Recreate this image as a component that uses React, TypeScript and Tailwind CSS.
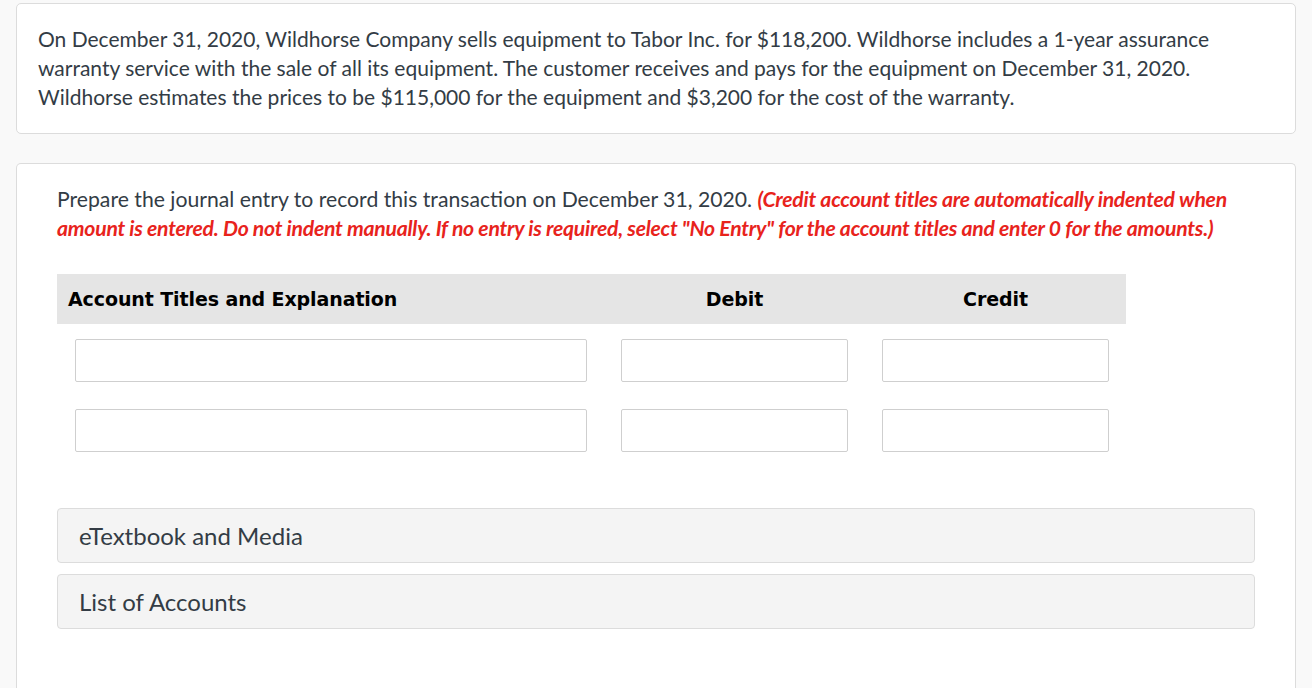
export default function App() {
  const lato = { fontFamily: "Lato, 'Open Sans', sans-serif" };
  const rows = [0, 1];
  return (
    <div className="h-[688px] bg-[#f9f9f9] pl-4 pr-4 pt-[3px] overflow-hidden" style={lato}>
      {/* question card */}
      <div className="rounded-[5px] border border-[#dcdcdc] bg-white pl-[21px] pr-4 pt-[20px] pb-[22px]">
        <p className="text-[21px] leading-[29px] text-[#333c45] whitespace-nowrap">
          On December 31, 2020, Wildhorse Company sells equipment to Tabor Inc. for $118,200. Wildhorse includes a 1-year assurance
          <br />
          warranty service with the sale of all its equipment. The customer receives and pays for the equipment on December 31, 2020.
          <br />
          Wildhorse estimates the prices to be $115,000 for the equipment and $3,200 for the cost of the warranty.
        </p>
      </div>

      {/* answer card */}
      <div className="mt-[29px] rounded-t-[5px] border border-b-0 border-[#dcdcdc] bg-white pl-10 pr-10 pt-[21px] h-[600px]">
        <p className="text-[21.2px] leading-[29px] text-[#333c45] whitespace-nowrap">
          Prepare the journal entry to record this transaction on December 31, 2020.{" "}
          <span className="font-bold italic text-[#e8231c] tracking-[-0.25px]">
            (Credit account titles are automatically indented when
            <br />
            amount is entered. Do not indent manually. If no entry is required, select "No Entry" for the account titles and enter 0 for the amounts.)
          </span>
        </p>

        <div className="mt-[31px] w-[1069px]">
          <div
            className="grid grid-cols-[547px_261px_261px] h-[50px] items-center bg-[#e5e5e5] text-[19px] font-bold text-black"
            style={{ fontFamily: "'DejaVu Sans', Verdana, sans-serif" }}
          >
            <div className="pl-[11px] tracking-[-0.1px]">Account Titles and Explanation</div>
            <div className="text-center tracking-[-0.1px]">Debit</div>
            <div className="text-center tracking-[-0.1px]">Credit</div>
          </div>
          {rows.map((r) => (
            <div key={r} className="grid grid-cols-[547px_261px_261px] mt-[15px]">
              <div className="pl-[18px] pr-[17px] pb-[12px]">
                <input className="block w-full h-[43px] rounded-[2px] border border-[#cfcfcf] bg-white outline-none" />
              </div>
              <div className="px-[17px] pb-[12px]">
                <input className="block w-full h-[43px] rounded-[2px] border border-[#cfcfcf] bg-white outline-none" />
              </div>
              <div className="px-[17px] pb-[12px]">
                <input className="block w-full h-[43px] rounded-[2px] border border-[#cfcfcf] bg-white outline-none" />
              </div>
            </div>
          ))}
        </div>

        <div className="mt-[44px] flex flex-col gap-[11px] w-[1198px]">
          {["eTextbook and Media", "List of Accounts"].map((t) => (
            <div
              key={t}
              className="h-[55px] flex items-center rounded-[4px] border border-[#dcdcdc] bg-[#f4f4f4] pl-[21px] text-[24px] text-[#333c45]"
            >
              {t}
            </div>
          ))}
        </div>
      </div>
    </div>
  );
}
